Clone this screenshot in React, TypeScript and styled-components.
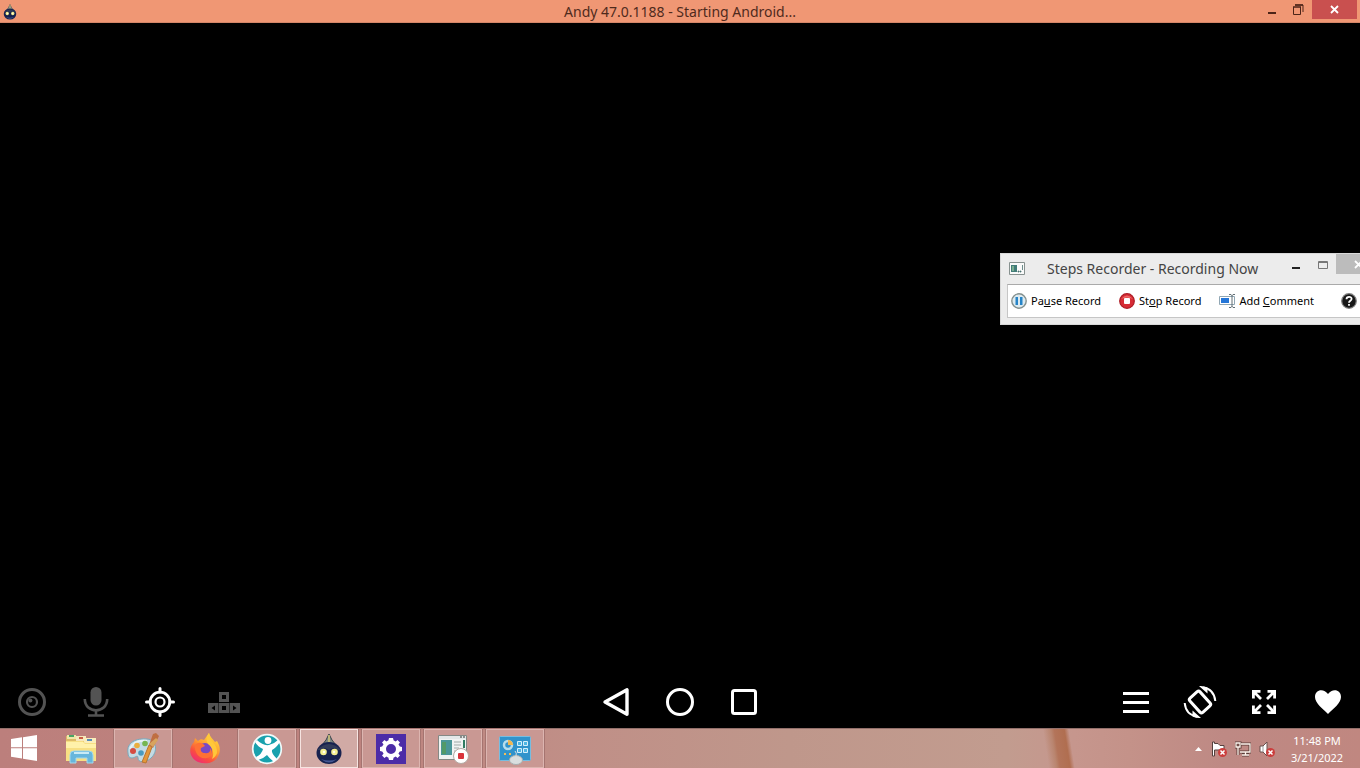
import React from 'react';
import styled, { createGlobalStyle, css } from 'styled-components';

const GlobalStyle = createGlobalStyle`
  * { box-sizing: border-box; }
  body { margin: 0; background: #000; font-family: "Noto Sans", "Open Sans", sans-serif; }
  button { font: inherit; color: inherit; background: none; border: 0; padding: 0; margin: 0; }
  svg { display: block; flex: none; }
`;

const Screen = styled.div`
  display: flex;
  flex-direction: column;
  min-height: 100vh;
  overflow: hidden;
  position: relative;
`;

const TitleBar = styled.header`
  display: grid;
  grid-template-columns: 1fr auto 1fr;
  align-items: center;
  height: 23px;
  background: #f09774;
  border-bottom: 1px solid #d58668;
`;

const TitleIcon = styled.div`
  padding-left: 2px;
`;

const Title = styled.h1`
  margin: 0;
  font-size: 14px;
  line-height: 24px;
  font-weight: 400;
  color: #4f2a1c;
  white-space: nowrap;
`;

const WindowControls = styled.div`
  display: flex;
  justify-content: flex-end;
  align-self: start;
  padding-right: 3px;
`;

const ControlButton = styled.button<{ $close?: boolean }>`
  display: flex;
  align-items: center;
  justify-content: center;
  width: ${p => (p.$close ? 45 : 27)}px;
  height: 19px;
  background: ${p => (p.$close ? '#c9504f' : 'transparent')};
`;

const Stage = styled.main`
  display: flex;
  flex: 1;
  flex-direction: column;
  justify-content: flex-end;
  background: #000;
`;

const NavBar = styled.nav`
  display: grid;
  grid-template-columns: 1fr auto 1fr;
  height: 53px;
`;

const NavGroup = styled.div<{ $end?: boolean }>`
  display: flex;
  justify-content: ${p => (p.$end ? 'flex-end' : 'flex-start')};
`;

const NavButton = styled.button<{ $dim?: boolean }>`
  display: flex;
  align-items: center;
  justify-content: center;
  width: 64px;
  color: ${p => (p.$dim ? '#535353' : '#fff')};
`;

const Recorder = styled.section`
  position: absolute;
  top: 253px;
  right: 0;
  width: 360px;
  height: 72px;
  overflow: hidden;
  background: #ececec;
  border: 1px solid #d8d8d8;
  border-right: 0;
`;

const RecorderHead = styled.div`
  display: flex;
  align-items: center;
  height: 30px;
  padding-left: 8px;
`;

const RecorderTitle = styled.h2`
  flex: 1;
  margin: 0 0 0 22px;
  font-size: 14px;
  line-height: 30px;
  font-weight: 400;
  color: #444;
  white-space: nowrap;
`;

const RecorderControl = styled.button<{ $close?: boolean }>`
  display: flex;
  align-items: center;
  align-self: flex-start;
  justify-content: ${p => (p.$close ? 'flex-end' : 'center')};
  width: ${p => (p.$close ? 24 : 27)}px;
  height: ${p => (p.$close ? 20 : 22)}px;
  background: ${p => (p.$close ? '#bcbcbc' : 'transparent')};
`;

const RecorderTools = styled.div`
  display: flex;
  align-items: center;
  height: 34px;
  margin-left: 6px;
  padding: 0 3px;
  background: #fff;
  border: 1px solid #c6c6c6;
  border-top-color: #aaa;
  border-right: 0;
`;

const ToolButton = styled.button`
  display: flex;
  align-items: center;
  gap: 4px;
  margin-right: 18px;
  font-size: 11px;
  line-height: 16px;
  color: #000;
  white-space: nowrap;
`;

const HelpButton = styled.button`
  margin-left: auto;
`;

const TaskBar = styled.footer`
  display: flex;
  height: 40px;
  border-top: 1px solid #93706b;
  background:
    linear-gradient(81deg, transparent 16%, #b9856f 30%, #b3745a 36%, #b06e50 54%, transparent 62%) right 270px top / 50px 100% no-repeat,
    linear-gradient(90deg, #bc7f7c 0%, #be847f 28%, #c08f87 42%, #bf978b 58%, #c29c8f 74%, #c6968d 79%, #c49289 83%, #be8984 90%, #c08780 100%);
`;

const StartButton = styled.button`
  display: flex;
  align-items: center;
  justify-content: center;
  width: 48px;
  margin-right: 4px;
`;

const TaskList = styled.div`
  display: flex;
  flex: 1;
  gap: 4px;
`;

const TaskButton = styled.button<{ $state?: 'open' | 'active' }>`
  display: flex;
  align-items: center;
  justify-content: center;
  width: 58px;
  border: 1px solid transparent;
  ${p => p.$state === 'open' && css`
    background: #c99893;
    border-color: #dcb5b0;
    outline: 1px solid #a57470;
  `}
  ${p => p.$state === 'active' && css`
    background: #d1aaa5;
    border-color: #f6e4e1;
    outline: 1px solid #9c6e6a;
  `}
`;

const Tray = styled.div`
  display: flex;
  align-items: center;
  gap: 8px;
`;

const TrayButton = styled.button``;

const Clock = styled.time`
  width: 68px;
  margin-right: 9px;
  font-size: 11px;
  line-height: 17px;
  text-align: center;
  color: #fff;
  white-space: nowrap;
`;

function AndyHead({ size }: { size: number }) {
  return (
    <svg width={size} height={size} viewBox="0 0 32 32" aria-hidden="true">
      <path d="M9 12 13 7 16 1 19 7 23 12Z" fill="#7e8782" stroke="#39444b" />
      <path d="M16 2V12" stroke="#d3c779" strokeWidth="1.5" />
      <ellipse cx="16" cy="20" rx="12.500" ry="11" fill="#17224f" />
      <path d="M4 17Q16 5 28 17L24 17 20 15 16 17 12 15 8 17Z" fill="#303b58" />
      <path d="M8 26Q16 33 24 26Q16 29 8 26Z" fill="#445793" />
      <circle cx="10.500" cy="19" r="3.300" fill="#f5ef90" />
      <circle cx="21.500" cy="19" r="3.300" fill="#f5ef90" />
      <circle cx="11" cy="19" r="1.200" fill="#fffff0" />
      <circle cx="21" cy="19" r="1.200" fill="#fffff0" />
    </svg>
  );
}

const EyeIcon = () => (
  <svg width="30" height="30" viewBox="0 0 30 30" fill="none" stroke="currentColor">
    <circle cx="15" cy="15" r="12.500" strokeWidth="3" />
    <circle cx="15" cy="15" r="5" strokeWidth="2.200" />
    <circle cx="13.400" cy="13.400" r="2" fill="currentColor" stroke="none" />
  </svg>
);

const MicIcon = () => (
  <svg width="26" height="32" viewBox="0 0 26 32" fill="none" stroke="currentColor">
    <rect x="7.500" y="1" width="11" height="18.500" rx="5.500" fill="currentColor" stroke="none" />
    <path d="M1.800 13C1.800 28 24.200 28 24.200 13M13 24V29M5 29.500H21" strokeWidth="2.600" />
  </svg>
);

const LocateIcon = () => (
  <svg width="32" height="32" viewBox="0 0 32 32" fill="none" stroke="currentColor">
    <circle cx="16" cy="16" r="9.800" strokeWidth="2.800" />
    <circle cx="16" cy="16" r="4.500" strokeWidth="2.200" />
    <path d="M16 2.500V6M16 26V29.500M2.500 16H6M26 16H29.500" strokeWidth="3" strokeLinecap="round" />
  </svg>
);

const PadIcon = () => (
  <svg width="32" height="32" viewBox="0 0 32 32">
    <path fill="currentColor" fillRule="evenodd" d="M11 6H21V16H11ZM14 9V13H18V9ZM0 17H10.500V27H0ZM3.500 22 7 19.500V24.500ZM11 17H21V27H11ZM14 20V24H18V20ZM21.500 17H32V27H21.500ZM28.500 22 25 19.500V24.500Z" />
  </svg>
);

const BackIcon = () => (
  <svg width="30" height="30" viewBox="0 0 30 30" fill="none" stroke="currentColor">
    <path d="M4 15 26 2.800V27.200Z" strokeWidth="3.400" strokeLinejoin="round" />
  </svg>
);

const HomeIcon = () => (
  <svg width="30" height="30" viewBox="0 0 30 30" fill="none" stroke="currentColor">
    <circle cx="15" cy="15" r="12.500" strokeWidth="3" />
  </svg>
);

const SquareIcon = () => (
  <svg width="30" height="30" viewBox="0 0 30 30" fill="none" stroke="currentColor">
    <rect x="3.500" y="3.500" width="23" height="23" rx="2" strokeWidth="3" />
  </svg>
);

const MenuIcon = () => (
  <svg width="30" height="30" viewBox="0 0 30 30">
    <path d="M2 5H28V8H2ZM2 14H28V17H2ZM2 23H28V26H2Z" fill="currentColor" />
  </svg>
);

const RotateIcon = () => (
  <svg width="34" height="34" viewBox="0 0 34 34" fill="none" stroke="currentColor">
    <rect x="10.200" y="7.500" width="13.600" height="19" rx="2" strokeWidth="3" transform="rotate(-42 17 17)" />
    <path d="M20 2.500C27 3.500 31.500 8 32.300 16M14 31.500C7 30.500 2.500 26 1.700 18" strokeWidth="2" />
    <path d="M16 1Q20 .5 24.500 2.500V8.500ZM18 33Q14 33.500 9.500 31.500V25.500Z" fill="currentColor" stroke="none" />
  </svg>
);

const ExpandIcon = () => (
  <svg width="24" height="24" viewBox="0 0 24 24" fill="none" stroke="currentColor" strokeWidth="2.800">
    <path d="M8.500 1.400H1.400V8.500M15.500 1.400H22.600V8.500M8.500 22.600H1.400V15.500M15.500 22.600H22.600V15.500M2 2 9 9M22 2 15 9M2 22 9 15M22 22 15 15" />
  </svg>
);

const HeartIcon = () => (
  <svg width="28" height="28" viewBox="0 0 28 28">
    <path d="M14 26C9 21 1 15 1 9C1 1 10 0 14 6C18 0 27 1 27 9C27 15 19 21 14 26Z" fill="currentColor" />
  </svg>
);

const RecorderIcon = () => (
  <svg width="16" height="14" viewBox="0 0 16 14">
    <path d="M.5 .5H15.500V12.500H.5Z" fill="#fafafa" stroke="#87918f" />
    <path d="M2 3H8V10H2Z" fill="#427c78" />
    <path d="M4 4V9" stroke="#7bae90" strokeWidth="2" />
    <path d="M9 9H10V10H9ZM11 9H12V10H11ZM13.500 3V8" fill="#49716e" stroke="#49716e" strokeWidth=".8" />
  </svg>
);

const PauseIcon = () => (
  <svg width="16" height="16" viewBox="0 0 16 16">
    <circle cx="8" cy="8" r="7.200" fill="#dceaf0" stroke="#84908e" strokeWidth="1.400" />
    <path d="M4.500 4H7V12H4.500ZM9 4H11.500V12H9Z" fill="#2684c7" />
  </svg>
);

const StopIcon = () => (
  <svg width="16" height="16" viewBox="0 0 16 16">
    <circle cx="8" cy="8" r="7.300" fill="#d72c35" stroke="#ad1b25" strokeWidth="1.200" />
    <path d="M2 6Q8-1 14 6Q8 3 2 6Z" fill="#ed6868" />
    <rect x="5" y="5" width="6" height="6" rx="1" fill="#fff" />
  </svg>
);

const CommentIcon = () => (
  <svg width="16" height="16" viewBox="0 0 16 16" fill="none">
    <path d="M.5 3.500H15.500V11.500H.5Z" fill="#fff" stroke="#91a7b4" />
    <path d="M2 5H10V10H2Z" fill="#2576d8" />
    <path d="M10 1.500H12L13 2.500 14 1.500H16M13 2V14M10 14.500H12L13 13.500 14 14.500H16" stroke="#626f75" />
  </svg>
);

const HelpIcon = () => (
  <svg width="16" height="16" viewBox="0 0 16 16">
    <circle cx="8" cy="8" r="7.300" fill="#171717" stroke="#808080" strokeWidth="1.200" />
    <path d="M5.500 6.200C5.500 3 10.800 3.100 10.600 6C10.400 7.700 8 7.800 8 9.700M8 11V12.800" fill="none" stroke="#fff" strokeWidth="1.800" />
  </svg>
);

const WindowsIcon = () => (
  <svg width="28" height="28" viewBox="0 0 28 28" fill="#fff">
    <path d="M1 4 12 2.300V12.300H1ZM13 2.200 27 0V12.300H13ZM1 13.300H12V23.500L1 21.800ZM13 13.300H27V26L13 23.700Z" />
  </svg>
);

const ExplorerIcon = () => (
  <svg width="32" height="32" viewBox="0 0 32 32">
    <path d="M1 3H9L11 6H29V28H1Z" fill="#ddba68" />
    <path d="M2 2H11V6H2Z" fill="#efe6a8" />
    <path d="M4 2H9V4H4Z" fill="#49a365" />
    <path d="M11 3H21V8H11Z" fill="#f7e7bb" />
    <path d="M14 4H18V6H14Z" fill="#c95d45" />
    <path d="M19 5H31V11H19Z" fill="#faedba" />
    <path d="M22 6H27V8H22Z" fill="#568db9" />
    <path d="M1 8H18L20 10H31V28H1Z" fill="#f7df83" />
    <path d="M1 9H18L20 11H31V15H1Z" fill="#fff1aa" />
    <path d="M5 30V22Q5 18 9 18H24Q28 18 28 22V30H22V25H11V30Z" fill="#67b6dc" stroke="#a2d8ed" />
    <path d="M9 20H24" stroke="#c8eaf5" strokeWidth="2" />
  </svg>
);

const PaintIcon = () => (
  <svg width="32" height="32" viewBox="0 0 32 32">
    <path d="M1 20C-1 9 10 5 20 6C30 7 31 19 24 25C19 30 11 30 11 25C11 21 8 25 5 25C2 25 1 23 1 20Z" fill="#c4dbe4" stroke="#79a9bc" />
    <path d="M3 16C6 9 12 7 20 8" fill="none" stroke="#e7f2f5" strokeWidth="2" />
    <circle cx="6" cy="18" r="3" fill="#d54c42" />
    <circle cx="10" cy="12.500" r="2.800" fill="#eaae3e" />
    <circle cx="18" cy="10.500" r="2.800" fill="#76b650" />
    <circle cx="14" cy="20" r="2.800" fill="#4a9bbf" />
    <path d="M15 29 22 12 25 14 19 30Z" fill="#e59738" stroke="#b97532" />
    <path d="M22 12 26 1 29 0 32 3 26 15Z" fill="#bf6e42" />
    <path d="M22 11 29 5 31 7 26 14Z" fill="#d8a45e" />
  </svg>
);

const FirefoxIcon = () => (
  <svg width="32" height="32" viewBox="0 0 32 32">
    <defs>
      <linearGradient id="fox" x1=".8" y1="0" x2=".2" y2="1">
        <stop stopColor="#ffe43d" /><stop offset=".45" stopColor="#ff9731" /><stop offset=".72" stopColor="#fa4f3e" /><stop offset="1" stopColor="#ee267e" />
      </linearGradient>
    </defs>
    <path d="M5 9 6 5 9 8C11 6 13 6 15 7L20 0C21 4 24 6 26 9L28 8C31 13 32 18 29 23C26 30 17 32 9 29C0 25-1 15 5 9Z" fill="url(#fox)" />
    <circle cx="16" cy="17" r="7" fill="#7849c4" />
    <path d="M6 12C10 8 14 10 16 13L12 15C11 18 13 20 16 20C20 21 22 18 21 15C24 18 23 24 18 25C10 27 5 19 6 12Z" fill="#ff7135" />
    <path d="M20 0C20 9 29 10 28 20C27 23 25 25 23 26C26 19 23 14 19 11C17 8 17 4 20 0Z" fill="#ffc83a" />
  </svg>
);

const RunnerIcon = () => (
  <svg width="32" height="32" viewBox="0 0 32 32">
    <circle cx="16" cy="16" r="14.300" fill="#18a1ad" stroke="#effafa" strokeWidth="1.700" />
    <circle cx="17" cy="7.500" r="3.400" fill="#fff" />
    <path d="M4 9 6 7Q12 13 18 12Q23 11 27 7L29 9Q25 15 21 17Q20 20 26 26L23 29Q18 25 16 22Q12 26 7 27L5 24Q11 21 12 16Q7 14 4 9Z" fill="#fff" />
  </svg>
);

const GearIcon = () => (
  <svg width="30" height="30" viewBox="0 0 30 30">
    <path d="M0 0H30V30H0Z" fill="#4c2ca7" />
    <circle cx="15" cy="15" r="7" fill="none" stroke="#fff" strokeWidth="4" />
    <path d="M13 4H17L18 8H12ZM13 26H17L18 22H12ZM4 13V17L8 18V12ZM26 13V17L22 18V12ZM6 8.500 8.500 6 12 9 9 12ZM24 8.500 21.500 6 18 9 21 12ZM6 21.500 8.500 24 12 21 9 18ZM24 21.500 21.500 24 18 21 21 18Z" fill="#fff" />
  </svg>
);

const StepsIcon = () => (
  <svg width="32" height="32" viewBox="0 0 32 32">
    <path d="M1.500 2.500H29.500V26.500H1.500Z" fill="#f1f3f2" stroke="#858985" />
    <path d="M2 3H29V6H2Z" fill="#e4e8e8" />
    <path d="M23 3H25V5H23ZM26 3H28V5H26Z" fill="#8a8c8b" />
    <path d="M4 7H15V22H4Z" fill="#4a9698" />
    <path d="M5 9H9V21H5Z" fill="#529a68" />
    <path d="M17 9H24M17 12H24M17 15H22M17 18H20" stroke="#9fa9a8" />
    <path d="M27 7V15" stroke="#317c61" strokeWidth="2" />
    <circle cx="24" cy="23" r="7.500" fill="#fff" stroke="#b4aaa4" />
    <rect x="21" y="20" width="6" height="6" rx="1" fill="#d9343b" />
  </svg>
);

const ControlPanelIcon = () => (
  <svg width="32" height="32" viewBox="0 0 32 32">
    <rect x=".5" y="3.500" width="31" height="24" rx="1" fill="#3093cb" stroke="#75bde1" />
    <circle cx="9" cy="12" r="4" fill="none" stroke="#b5ddec" strokeWidth="2.500" />
    <path d="M9 12V7A5 5 0 0 1 14 12Z" fill="#f0b650" />
    <path d="M18.500 8.500H22.500V12.500H18.500ZM24.500 8.500H28.500V12.500H24.500ZM18.500 15.500H22.500V19.500H18.500ZM24.500 15.500H28.500V19.500H24.500Z" fill="#4fb6e3" stroke="#d4effa" />
    <path d="M5 21H7M10 21H12" stroke="#f3bd58" strokeWidth="2" />
    <ellipse cx="17" cy="27" rx="6.500" ry="4.500" fill="#d9dfdf" stroke="#a6b0b1" />
    <path d="M17 23Q18 20 16 18" fill="none" stroke="#d7dfe1" />
  </svg>
);

const RedBadge = () => (
  <>
    <circle cx="11.500" cy="11.500" r="4.500" fill="#cb3e3d" />
    <path d="m9.500 9.500 4 4m0-4-4 4" stroke="#fff" strokeWidth="1.500" />
  </>
);

const FlagIcon = () => (
  <svg width="16" height="16" viewBox="0 0 16 16">
    <path d="M1.500 1V15H3.500V9H8L13 9.500V4.500H9L7 2.500H3.500V1Z" fill="#fff" stroke="#55413e" />
    <RedBadge />
  </svg>
);

const NetworkIcon = () => (
  <svg width="16" height="16" viewBox="0 0 16 16" fill="none">
    <path d="M6 3H15V11H5M10.500 11V14M7 14H14M1 2H5V6H1ZM3 6V14" stroke="#5b3d38" strokeWidth="3" />
    <path d="M6 3H15V11H5M10.500 11V14M7 14H14M1 2H5V6H1ZM3 6V14" stroke="#fff4ed" strokeWidth="1.300" />
  </svg>
);

const SpeakerIcon = () => (
  <svg width="16" height="16" viewBox="0 0 16 16">
    <path d="M1 5H4L8 1V15L4 11H1Z" fill="#fff" stroke="#68514d" />
    <path d="M4 5V11" stroke="#999" />
    <RedBadge />
  </svg>
);

const tasks: { name: string; icon: React.ReactNode; state?: 'open' | 'active' }[] = [
  { name: 'File Explorer', icon: <ExplorerIcon /> },
  { name: 'Paint', icon: <PaintIcon />, state: 'open' },
  { name: 'Firefox', icon: <FirefoxIcon /> },
  { name: 'Runner', icon: <RunnerIcon />, state: 'open' },
  { name: 'Andy', icon: <AndyHead size={32} />, state: 'active' },
  { name: 'Settings', icon: <GearIcon />, state: 'open' },
  { name: 'Steps Recorder', icon: <StepsIcon />, state: 'open' },
  { name: 'Control Panel', icon: <ControlPanelIcon />, state: 'open' },
];

export default function App() {
  return (
    <Screen>
      <GlobalStyle />
      <TitleBar>
        <TitleIcon><AndyHead size={16} /></TitleIcon>
        <Title>Andy 47.0.1188 - Starting Android...</Title>
        <WindowControls>
          <ControlButton aria-label="Minimize">
            <svg width="12" height="12" viewBox="0 0 12 12"><path d="M2 8H10V10H2Z" fill="#4c2418" /></svg>
          </ControlButton>
          <ControlButton aria-label="Restore">
            <svg width="12" height="12" viewBox="0 0 12 12" fill="none" stroke="#4c2418"><path d="M.5 3V10.500H7.500V3M2 1H10V8" /><path d="M0 3H8M2 1H10" strokeWidth="1.500" /></svg>
          </ControlButton>
          <ControlButton $close aria-label="Close">
            <svg width="9" height="9" viewBox="0 0 9 9"><path d="m1 1 7 7m0-7-7 7" stroke="#fff" strokeWidth="1.800" /></svg>
          </ControlButton>
        </WindowControls>
      </TitleBar>
      <Stage>
        <NavBar aria-label="Android controls">
          <NavGroup>
            <NavButton $dim aria-label="Camera"><EyeIcon /></NavButton>
            <NavButton $dim aria-label="Microphone"><MicIcon /></NavButton>
            <NavButton aria-label="Location"><LocateIcon /></NavButton>
            <NavButton $dim aria-label="Key pad"><PadIcon /></NavButton>
          </NavGroup>
          <NavGroup>
            <NavButton aria-label="Back"><BackIcon /></NavButton>
            <NavButton aria-label="Home"><HomeIcon /></NavButton>
            <NavButton aria-label="Recent apps"><SquareIcon /></NavButton>
          </NavGroup>
          <NavGroup $end>
            <NavButton aria-label="Menu"><MenuIcon /></NavButton>
            <NavButton aria-label="Rotate"><RotateIcon /></NavButton>
            <NavButton aria-label="Full screen"><ExpandIcon /></NavButton>
            <NavButton aria-label="Like"><HeartIcon /></NavButton>
          </NavGroup>
        </NavBar>
      </Stage>
      <Recorder aria-label="Steps Recorder">
        <RecorderHead>
          <RecorderIcon />
          <RecorderTitle>Steps Recorder - Recording Now</RecorderTitle>
          <RecorderControl aria-label="Minimize recorder">
            <svg width="10" height="12" viewBox="0 0 10 12"><path d="M1 8H9V10H1Z" fill="#222" /></svg>
          </RecorderControl>
          <RecorderControl aria-label="Maximize recorder">
            <svg width="10" height="8" viewBox="0 0 10 8"><path d="M.5 .5H9.500V7.500H.5ZM.5 1.500H9.500" fill="none" stroke="#777" /></svg>
          </RecorderControl>
          <RecorderControl $close aria-label="Close recorder">
            <svg width="6" height="9" viewBox="0 0 6 9"><path d="m1 1 7 7m0-7-7 7" stroke="#fff" strokeWidth="1.800" /></svg>
          </RecorderControl>
        </RecorderHead>
        <RecorderTools>
          <ToolButton><PauseIcon /><span>Pa<u>u</u>se Record</span></ToolButton>
          <ToolButton><StopIcon /><span>St<u>o</u>p Record</span></ToolButton>
          <ToolButton><CommentIcon /><span>Add <u>C</u>omment</span></ToolButton>
          <HelpButton aria-label="Help"><HelpIcon /></HelpButton>
        </RecorderTools>
      </Recorder>
      <TaskBar>
        <StartButton aria-label="Start"><WindowsIcon /></StartButton>
        <TaskList>
          {tasks.map(task => (
            <TaskButton key={task.name} $state={task.state} aria-label={task.name}>{task.icon}</TaskButton>
          ))}
        </TaskList>
        <Tray>
          <TrayButton aria-label="Show hidden icons">
            <svg width="9" height="6" viewBox="0 0 9 6"><path d="M1 5 4.500 1 8 5Z" fill="#fff" /></svg>
          </TrayButton>
          <TrayButton aria-label="Action center"><FlagIcon /></TrayButton>
          <TrayButton aria-label="Network"><NetworkIcon /></TrayButton>
          <TrayButton aria-label="Volume"><SpeakerIcon /></TrayButton>
          <Clock dateTime="2022-03-21T23:48">11:48 PM<br />3/21/2022</Clock>
        </Tray>
      </TaskBar>
    </Screen>
  );
}
